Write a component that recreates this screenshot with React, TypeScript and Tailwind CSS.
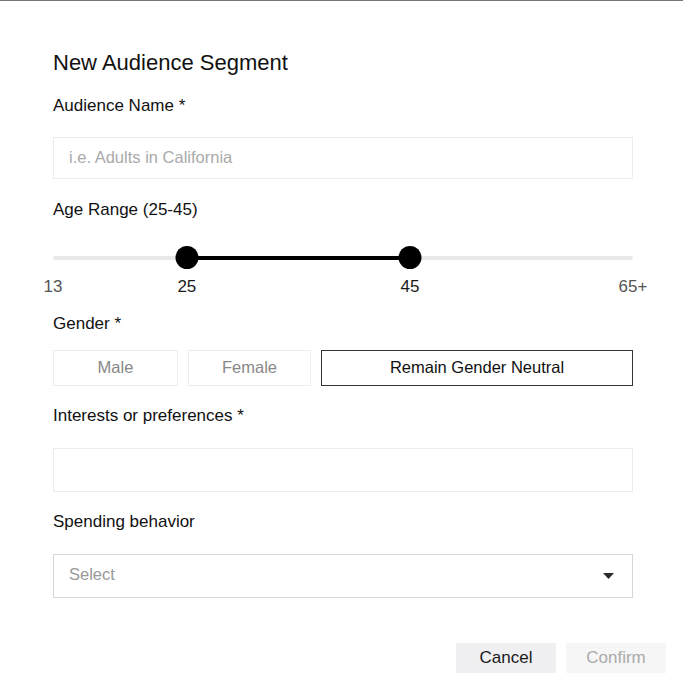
import { useState } from "react";

const MIN_AGE = 13;
const MAX_AGE = 65;

const pct = (v: number) => ((v - MIN_AGE) / (MAX_AGE - MIN_AGE)) * 100;

function AgeSlider({ low, high }: { low: number; high: number }) {
  const marks = [
    { v: MIN_AGE, label: "13", dark: false },
    { v: low, label: String(low), dark: true },
    { v: high, label: String(high), dark: true },
    { v: MAX_AGE, label: "65+", dark: false },
  ];

  return (
    <div>
      <div className="relative h-[23px] mt-[26px]">
        <div className="absolute left-0 right-0 top-[9.5px] h-[4px] rounded-full bg-[#e8e8e8]" />
        <div
          className="absolute top-[9.5px] h-[4px] bg-black"
          style={{ left: `${pct(low)}%`, width: `${pct(high) - pct(low)}%` }}
        />
        {[low, high].map((v) => (
          <div
            key={v}
            className="absolute top-0 h-[23px] w-[23px] -translate-x-1/2 rounded-full bg-black"
            style={{ left: `${pct(v)}%` }}
          />
        ))}
      </div>
      <div className="relative h-[20px] mt-[8px]">
        {marks.map((m) => (
          <span
            key={m.label}
            className={`absolute top-0 -translate-x-1/2 text-[17px] leading-[20px] ${
              m.dark ? "text-[#1a1a1a]" : "text-[#555]"
            }`}
            style={{ left: `${pct(m.v)}%` }}
          >
            {m.label}
          </span>
        ))}
      </div>
    </div>
  );
}

export default function App() {
  const [gender, setGender] = useState("neutral");
  const [name, setName] = useState("");
  const [interests, setInterests] = useState("");

  const genders = [
    { id: "male", label: "Male", w: "w-[125px]" },
    { id: "female", label: "Female", w: "w-[123px]" },
    { id: "neutral", label: "Remain Gender Neutral", w: "flex-1" },
  ];

  return (
    <div
      className="min-h-[695px] w-full border-t border-[#777] bg-white text-[#111]"
      style={{ fontFamily: '"Liberation Sans", Arial, sans-serif' }}
    >
      <div className="pl-[53px] pr-[50px] pt-[50px]">
        <h1 className="text-[22px] leading-[24px] font-normal">New Audience Segment</h1>

        <label className="block mt-[21px] text-[17px] leading-[20px]">Audience Name *</label>
        <input
          value={name}
          onChange={(e) => setName(e.target.value)}
          placeholder="i.e. Adults in California"
          className="mt-[21px] block h-[42px] w-full border border-[#ececec] px-[15px] pb-[2px] text-[16.5px] outline-none placeholder:text-[#aaa]"
        />

        <label className="block mt-[21px] text-[17px] leading-[20px]">Age Range (25-45)</label>
        <AgeSlider low={25} high={45} />

        <label className="block mt-[17px] text-[17px] leading-[20px]">Gender *</label>
        <div className="mt-[16px] flex gap-[10px]">
          {genders.map((g) => (
            <button
              key={g.id}
              onClick={() => setGender(g.id)}
              className={`h-[36px] ${g.w} border pb-[2px] text-[16.5px] ${
                gender === g.id ? "border-[#333] text-[#111]" : "border-[#ececec] text-[#888]"
              }`}
            >
              {g.label}
            </button>
          ))}
        </div>

        <label className="block mt-[20px] text-[17px] leading-[20px]">Interests or preferences *</label>
        <input
          value={interests}
          onChange={(e) => setInterests(e.target.value)}
          className="mt-[22px] block h-[44px] w-full border border-[#ececec] px-[15px] text-[16.5px] outline-none"
        />

        <label className="block mt-[20px] text-[17px] leading-[20px]">Spending behavior</label>
        <div className="mt-[22px] flex h-[44px] w-full items-center justify-between border border-[#d6d6d6] pl-[15px] pr-[18px]">
          <span className="pb-[3px] text-[16.5px] text-[#999]">Select</span>
          <svg width="11" height="6" viewBox="0 0 11 6">
            <path d="M0 0h11L5.5 6z" fill="#2b2b2b" />
          </svg>
        </div>
      </div>

      <div className="mt-[45px] flex justify-end gap-[10px] pr-[17px]">
        <button className="h-[30px] w-[100px] bg-[#f0f0f2] text-[17px] text-[#1a1a1a]">Cancel</button>
        <button className="h-[30px] w-[100px] bg-[#f6f6f6] text-[17px] text-[#aaa]">Confirm</button>
      </div>
    </div>
  );
}
